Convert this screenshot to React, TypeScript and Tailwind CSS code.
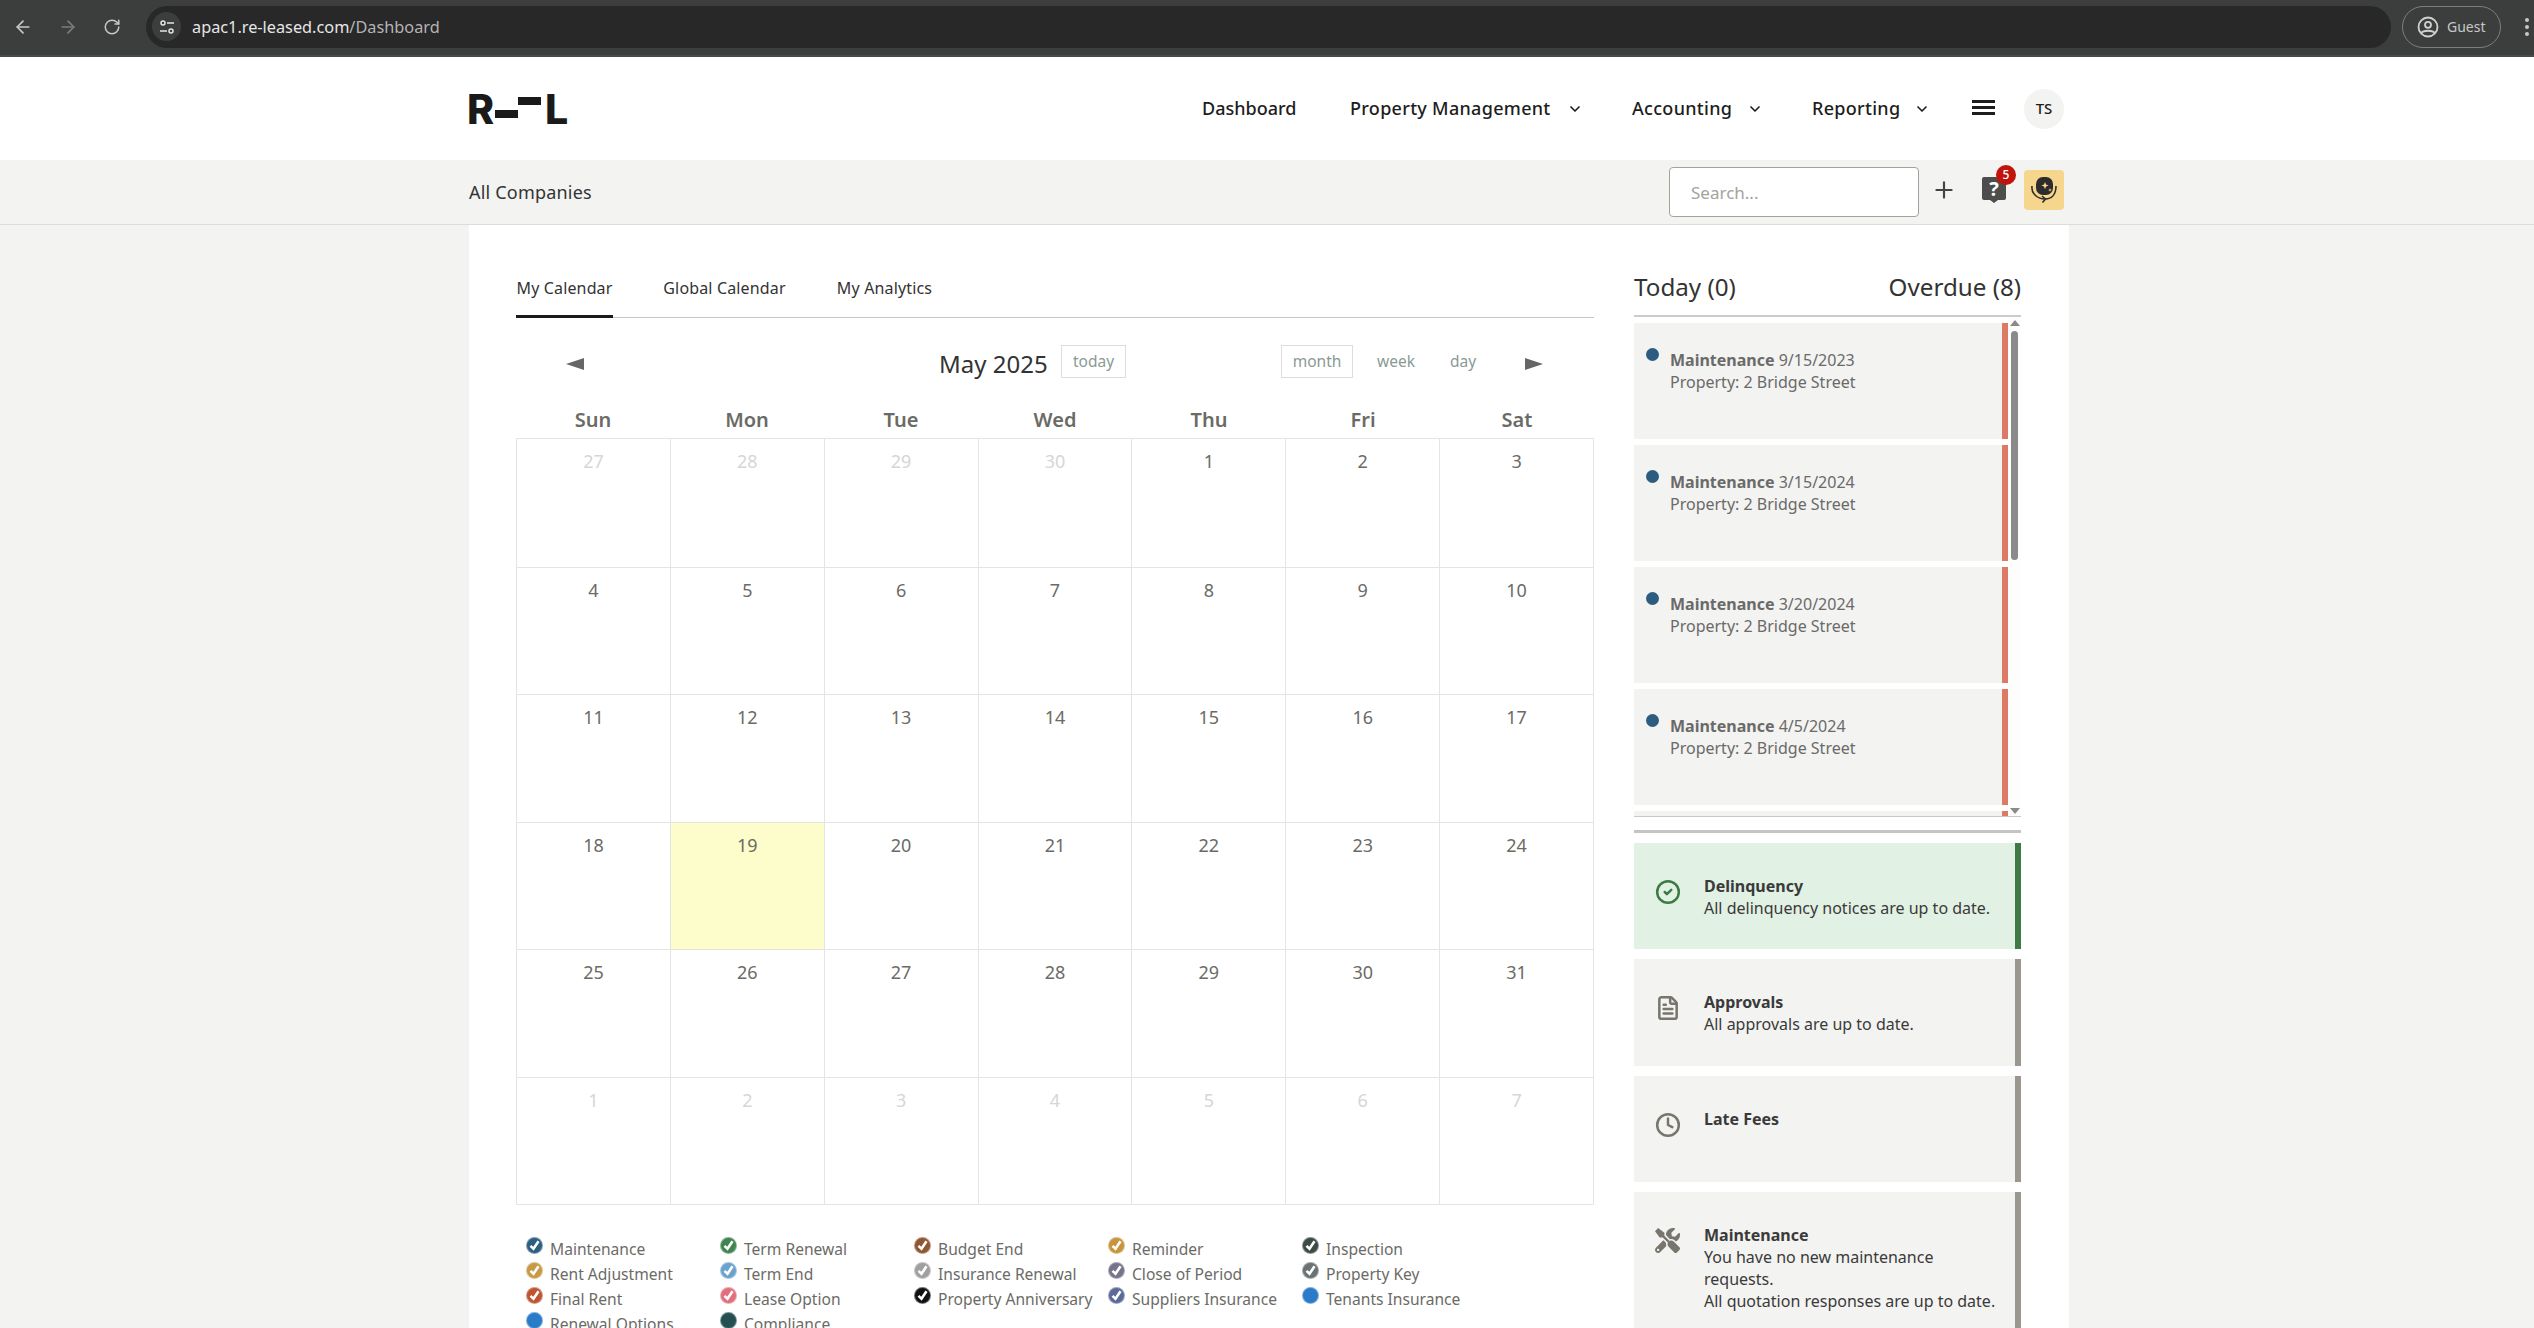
import React from 'react'
import { ArrowLeft, ArrowRight, RotateCw, ChevronDown, Plus, CircleCheck, FileText, Clock } from 'lucide-react'
import { FaTools } from 'react-icons/fa'

const weeks = [
    [27, 28, 29, 30, 1, 2, 3],
    [4, 5, 6, 7, 8, 9, 10],
    [11, 12, 13, 14, 15, 16, 17],
    [18, 19, 20, 21, 22, 23, 24],
    [25, 26, 27, 28, 29, 30, 31],
    [1, 2, 3, 4, 5, 6, 7],
]

const days = ['Sun', 'Mon', 'Tue', 'Wed', 'Thu', 'Fri', 'Sat']

const legend = [
    [
        { label: 'Maintenance', color: 'bg-[#2f5f80]', check: true },
        { label: 'Rent Adjustment', color: 'bg-[#c99a45]', check: true },
        { label: 'Final Rent', color: 'bg-[#bf5530]', check: true },
        { label: 'Renewal Options', color: 'bg-[#2a7bc8]', check: false },
    ],
    [
        { label: 'Term Renewal', color: 'bg-[#3f8550]', check: true },
        { label: 'Term End', color: 'bg-[#6ba3cf]', check: true },
        { label: 'Lease Option', color: 'bg-[#e2707c]', check: true },
        { label: 'Compliance', color: 'bg-[#245052]', check: false },
    ],
    [
        { label: 'Budget End', color: 'bg-[#8f5632]', check: true },
        { label: 'Insurance Renewal', color: 'bg-[#a0a0a0]', check: true },
        { label: 'Property Anniversary', color: 'bg-[#111111]', check: true },
    ],
    [
        { label: 'Reminder', color: 'bg-[#c9953c]', check: true },
        { label: 'Close of Period', color: 'bg-[#76748a]', check: true },
        { label: 'Suppliers Insurance', color: 'bg-[#5c6a98]', check: true },
    ],
    [
        { label: 'Inspection', color: 'bg-[#3c4a48]', check: true },
        { label: 'Property Key', color: 'bg-[#6a7272]', check: true },
        { label: 'Tenants Insurance', color: 'bg-[#2a7bc8]', check: false },
    ],
]

const overdue = ['9/15/2023', '3/15/2024', '3/20/2024', '4/5/2024']

const BrowserBar = () => (
    <div className="flex h-[57px] items-center border-b-2 border-[#484a4a] bg-[#3c3e3e] pb-[2px] text-[#c7c7c7]">
        <ArrowLeft className="ml-[13px] h-[20px] w-[20px]" strokeWidth={2} />
        <ArrowRight className="ml-[25px] h-[20px] w-[20px] text-[#7b7d7d]" strokeWidth={2} />
        <RotateCw className="ml-[25px] h-[18px] w-[18px]" strokeWidth={2} />
        <div className="ml-[25px] flex h-[42px] w-[2245px] items-center rounded-full bg-[#282828]">
            <div className="ml-[6px] flex h-[29px] w-[29px] items-center justify-center rounded-full bg-[#3c3e3e]">
                <svg width="16" height="16" viewBox="0 0 16 16" fill="none" stroke="#e3e3e3" strokeWidth="1.5">
                    <circle cx="4" cy="4" r="2" />
                    <path d="M8 4h7M1 12h7" />
                    <circle cx="12" cy="12" r="2" />
                </svg>
            </div>
            <span className="ml-[11px] pt-[1px] text-[16.3px] text-[#e6e6e6]">
                apac1.re-leased.com<span className="text-[#b4b4b4]">/Dashboard</span>
            </span>
        </div>
        <div className="ml-[11px] flex h-[42px] w-[99px] items-center rounded-full border border-[#7d7f7f]">
            <svg className="ml-[14px]" width="22" height="22" viewBox="0 0 22 22" fill="none" stroke="#d0d0d0" strokeWidth="1.8">
                <circle cx="11" cy="11" r="9.5" />
                <circle cx="11" cy="8.8" r="3" />
                <path d="M4.5 17c1.5-3 11.5-3 13 0" />
            </svg>
            <span className="ml-[8px] text-[14px] text-[#c7c7c7]">Guest</span>
        </div>
        <div className="ml-[24px] flex flex-col gap-[3px]">
            <span className="h-[4px] w-[4px] rounded-full bg-[#c7c7c7]" />
            <span className="h-[4px] w-[4px] rounded-full bg-[#c7c7c7]" />
            <span className="h-[4px] w-[4px] rounded-full bg-[#c7c7c7]" />
        </div>
    </div>
)

const Logo = () => (
    <div className="ml-[-2px] flex h-[30px] items-center font-['Inter',sans-serif] text-[41px] leading-[30px] font-extrabold text-[#1a1a1a]">
        <span className="w-[28px]">R</span>
        <span className="mt-[11px] h-[8px] w-[23px] bg-[#1a1a1a]" />
        <span className="mb-[16px] h-[8px] w-[23px] bg-[#1a1a1a]" />
        <span className="ml-[4px]">L</span>
    </div>
)

const NavItem = ({ label, w }: { label: string; w: string }) => (
    <div className="flex items-center">
        <span className={`${w} text-[18px] font-medium tracking-[0.3px] whitespace-nowrap text-[#1d1d1d]`}>{label}</span>
        <ChevronDown className="ml-[13px] h-[16px] w-[16px] text-[#1d1d1d]" strokeWidth={2.5} />
    </div>
)

const Header = () => (
    <div className="flex h-[103px] items-center bg-white pr-[470px] pl-[469px]">
        <Logo />
        <div className="ml-auto flex items-center">
            <span className="w-[96px] text-[18px] font-medium text-[#1d1d1d]">Dashboard</span>
            <NavItem label="Property Management" w="ml-[52px] w-[204px]" />
            <NavItem label="Accounting" w="ml-[49px] w-[102px]" />
            <NavItem label="Reporting" w="ml-[49px] w-[89px]" />
            <div className="mb-[2px] ml-[42px] flex w-[23px] flex-col gap-[3px]">
                <span className="h-[3px] bg-[#1d1d1d]" />
                <span className="h-[3px] bg-[#1d1d1d]" />
                <span className="h-[3px] bg-[#1d1d1d]" />
            </div>
            <div className="ml-[29px] flex h-[40px] w-[40px] items-center justify-center rounded-full bg-[#f3f3f1] text-[15px] font-medium text-[#1d1d1d]">
                TS
            </div>
        </div>
    </div>
)

const SubBar = () => (
    <div className="flex h-[65px] items-center border-b border-[#dcdcda] pr-[470px] pl-[469px]">
        <span className="text-[18px] tracking-[0.2px] text-[#333333]">All Companies</span>
        <div className="ml-auto flex items-center">
            <input
                placeholder="Search..."
                className="h-[50px] w-[250px] rounded-[4px] border border-[#a3a39b] bg-white pl-[21px] text-[17px] placeholder:text-[#a3a39b]"
            />
            <Plus className="mb-[4px] ml-[12px] h-[26px] w-[26px] text-[#444444]" strokeWidth={2} />
            <div className="relative mb-[4px] ml-[25px] h-[26px] w-[24px]">
                <svg width="24" height="26" viewBox="0 0 24 26">
                    <path d="M2 0h20a2 2 0 0 1 2 2v19a2 2 0 0 1-2 2h-6l-4 3-4-3H2a2 2 0 0 1-2-2V2a2 2 0 0 1 2-2z" fill="#4d4d4b" />
                </svg>
                <span className="absolute top-[-1px] left-0 w-[24px] text-center text-[20px] leading-[26px] font-bold text-white">?</span>
                <span className="absolute top-[-12px] left-[14px] flex h-[20px] w-[20px] items-center justify-center rounded-full bg-[#c0140c] text-[12px] font-medium text-white">
                    5
                </span>
            </div>
            <div className="mb-[4px] ml-[18px] flex h-[40px] w-[40px] items-center justify-center rounded-[4px] bg-[#f6d68d]">
                <svg width="30" height="30" viewBox="0 0 30 30" fill="none">
                    <rect x="7" y="2" width="17" height="18" rx="7" fill="#2c2c2c" />
                    <path d="M16 7l1 2.6 2.6 1-2.6 1-1 2.6-1-2.6-2.6-1 2.6-1z" fill="#f6d68d" />
                    <path d="M21 13l.5 1.4 1.4.5-1.4.5-.5 1.4-.5-1.4-1.4-.5 1.4-.5z" fill="#f6d68d" />
                    <path d="M3 11c-1 8 6 13 13 13s11-5 11-13" stroke="#2c2c2c" strokeWidth="1.6" />
                    <path d="M13 21l3.5 3-3 3.5" stroke="#2c2c2c" strokeWidth="1.6" />
                </svg>
            </div>
        </div>
    </div>
)

const Tabs = () => (
    <div className="flex h-[48px] border-b border-[#c8c8c8] text-[16px] tracking-[0.15px] text-[#333333]">
        <div className="h-[48px] w-[97px] border-b-[3px] border-[#1a1a1a] pt-[6px] text-center whitespace-nowrap">My Calendar</div>
        <div className="ml-[50px] w-[123px] pt-[6px] text-center whitespace-nowrap">Global Calendar</div>
        <div className="ml-[50px] w-[97px] pt-[6px] text-center whitespace-nowrap">My Analytics</div>
    </div>
)

const Toolbar = () => (
    <div className="mt-[27px] flex h-[33px] items-center text-[15.5px] text-[#8a9a94]">
        <span className="mt-[5px] ml-[50px] h-0 w-0 border-y-[6px] border-r-[18px] border-y-transparent border-r-[#666666]" />
        <span className="mt-[4px] ml-[355px] w-[109px] text-[24px] whitespace-nowrap text-[#333333]">May 2025</span>
        <span className="ml-[13px] flex h-[33px] w-[65px] items-center justify-center border border-[#dddddd] pt-[1px]">today</span>
        <span className="ml-[155px] flex h-[33px] w-[72px] items-center justify-center border border-[#dddddd] pt-[1px]">month</span>
        <span className="ml-[24px] w-[38px] text-center">week</span>
        <span className="ml-[34px] w-[28px] text-center">day</span>
        <span className="mt-[5px] ml-[48px] h-0 w-0 border-y-[6px] border-l-[18px] border-y-transparent border-l-[#666666]" />
    </div>
)

const CalendarGrid = () => (
    <div>
        <div className="grid h-[60px] w-[1078px] grid-cols-7">
            {days.map((d) => (
                <div key={d} className="pt-[30px] text-center text-[20px] leading-[24px] font-semibold text-[#6b6b66]">
                    {d}
                </div>
            ))}
        </div>
        <div className="grid h-[767px] w-[1078px] grid-cols-7 grid-rows-[129px_repeat(5,1fr)] border-t border-l border-[#e4e4e4]">
            {weeks.map((week, r) =>
                week.map((n, c) => {
                    const muted = (r === 0 && c < 4) || r === 5
                    const today = r === 3 && c === 1
                    return (
                        <div
                            key={`${r}-${c}`}
                            className={`border-r border-b border-[#e4e4e4] pt-[9px] text-center text-[18px] leading-[26px] ${
                                muted ? 'text-[#d6d6d6]' : 'text-[#6b6b66]'
                            } ${today ? 'bg-[#fdfdcc]' : ''}`}
                        >
                            {n}
                        </div>
                    )
                }),
            )}
        </div>
    </div>
)

const LegendDot = ({ color, check }: { color: string; check: boolean }) => (
    <span className={`mt-[-8px] flex h-[17px] w-[17px] shrink-0 items-center justify-center rounded-full border border-[#ffffff66] ${color}`}>
        {check && (
            <svg width="13" height="13" viewBox="0 0 13 13" fill="none" stroke="white" strokeWidth="2.6">
                <path d="M2.5 6.8l3 3 5-7.5" />
            </svg>
        )}
    </span>
)

const Legend = () => (
    <div className="mt-[32px] flex pl-[10px] text-[15.6px] text-[#6b6b66]">
        {legend.map((col, i) => (
            <div key={i} className="w-[194px]">
                {col.map((item) => (
                    <div key={item.label} className="flex h-[25px] items-center whitespace-nowrap">
                        <LegendDot color={item.color} check={item.check} />
                        <span className="ml-[7px]">{item.label}</span>
                    </div>
                ))}
            </div>
        ))}
    </div>
)

const OverdueCard = ({ date }: { date?: string }) => (
    <div className="mb-[6px] flex h-[116px] shrink-0 border-r-[6px] border-[#dd7a66] bg-[#f3f3f1] text-[16px] leading-[22px] text-[#6a6a6a]">
        {date && (
            <>
                <span className="mt-[25px] ml-[12px] h-[13px] w-[13px] rounded-full bg-[#2c5d80]" />
                <div className="mt-[26px] ml-[11px]">
                    <div>
                        <span className="font-bold">Maintenance</span> {date}
                    </div>
                    <div>Property: 2 Bridge Street</div>
                </div>
            </>
        )}
    </div>
)

const StatusCard = ({
    title,
    icon,
    height,
    tone,
    children,
}: {
    title: string
    icon: React.ReactNode
    height: string
    tone: string
    children?: React.ReactNode
}) => (
    <div className={`mb-[10px] flex shrink-0 border-r-[6px] ${height} ${tone}`}>
        <div className="mt-[36px] ml-[21px] h-[26px] w-[26px]">{icon}</div>
        <div className="mt-[32px] ml-[23px] text-[16px] leading-[22px] whitespace-nowrap text-[#3a3a3a]">
            <div className="font-bold">{title}</div>
            {children}
        </div>
    </div>
)

const Sidebar = () => (
    <div className="w-[387px]">
        <div className="flex h-[47px] justify-between border-b-2 border-[#cccccc] pt-[1px] text-[24.2px] leading-[32px] text-[#333333]">
            <span>Today (0)</span>
            <span>Overdue (8)</span>
        </div>
        <div className="flex h-[500px] overflow-hidden border-b border-[#c8c8c8] pt-[6px]">
            <div className="w-[374px] overflow-hidden">
                {overdue.map((d) => (
                    <OverdueCard key={d} date={d} />
                ))}
                <OverdueCard />
            </div>
            <div className="mt-[-6px] flex w-[13px] flex-col items-center bg-[#fdfdfb]">
                <span className="mt-[3px] h-0 w-0 border-x-[5px] border-b-[6px] border-x-transparent border-b-[#8a8a8a]" />
                <span className="mt-[5px] h-[229px] w-[7px] rounded-full bg-[#8a8a8a]" />
                <span className="mt-[248px] h-0 w-0 border-x-[5px] border-t-[6px] border-x-transparent border-t-[#8a8a8a]" />
            </div>
        </div>
        <div className="mt-[13px] mb-[10px] h-[3px] bg-[#c4c4c0]" />
        <StatusCard
            title="Delinquency"
            height="h-[106px]"
            tone="border-[#3e7a45] bg-[#e1f1e3]"
            icon={<CircleCheck className="h-[26px] w-[26px] text-[#3e7a45]" strokeWidth={2.3} />}
        >
            <div>All delinquency notices are up to date.</div>
        </StatusCard>
        <StatusCard
            title="Approvals"
            height="h-[107px]"
            tone="border-[#9a988e] bg-[#f3f3f1]"
            icon={<FileText className="h-[26px] w-[26px] text-[#77756c]" strokeWidth={2.3} />}
        >
            <div>All approvals are up to date.</div>
        </StatusCard>
        <StatusCard
            title="Late Fees"
            height="h-[106px]"
            tone="border-[#9a988e] bg-[#f3f3f1]"
            icon={<Clock className="h-[26px] w-[26px] text-[#77756c]" strokeWidth={2.3} />}
        />
        <StatusCard
            title="Maintenance"
            height="h-[170px]"
            tone="border-[#9a988e] bg-[#f3f3f1]"
            icon={<FaTools className="h-[25px] w-[25px] text-[#77756c]" />}
        >
            <div>
                You have no new maintenance
                <br />
                requests.
            </div>
            <div>All quotation responses are up to date.</div>
        </StatusCard>
    </div>
)

export default function App() {
    return (
        <div className="h-[1328px] overflow-hidden bg-[#f3f3f1] font-['Noto_Sans',sans-serif]">
            <BrowserBar />
            <Header />
            <SubBar />
            <div className="ml-[469px] flex h-[1103px] w-[1600px] gap-[40px] bg-white pt-[45px] pl-[47px]">
                <div className="w-[1078px]">
                    <Tabs />
                    <Toolbar />
                    <CalendarGrid />
                    <Legend />
                </div>
                <Sidebar />
            </div>
        </div>
    )
}
